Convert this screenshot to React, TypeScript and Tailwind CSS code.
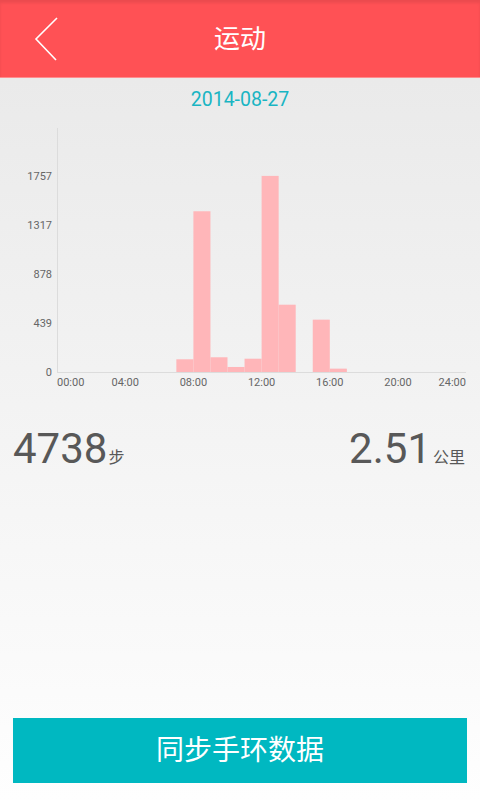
const CJK = "font-['Roboto','Noto_Sans_CJK_SC',sans-serif]";

const HOURS: { h: number; v: number }[] = [
  { h: 7, v: 114 },
  { h: 8, v: 1440 },
  { h: 9, v: 132 },
  { h: 10, v: 45 },
  { h: 11, v: 119 },
  { h: 12, v: 1757 },
  { h: 13, v: 603 },
  { h: 15, v: 469 },
  { h: 16, v: 30 },
];

const X0 = 57;
const SLOT = 17.05;
const BASE = 250;
const PER = 49 / 439;

function StepChart() {
  const yTicks = [0, 439, 878, 1317, 1757];
  const xTicks = ["00:00", "04:00", "08:00", "12:00", "16:00", "20:00", "24:00"];
  return (
    <svg width="480" height="280" viewBox="0 0 480 280" className="block">
      {HOURS.map((b) => {
        const hgt = b.v * PER;
        return (
          <rect
            key={b.h}
            x={X0 + SLOT * b.h}
            y={BASE - hgt}
            width={SLOT}
            height={hgt}
            fill="#ffb6b9"
          />
        );
      })}
      <line x1="57.5" y1="6" x2="57.5" y2={BASE} stroke="#dcdcdc" strokeWidth="1" />
      <line x1="57" y1={BASE + 0.5} x2="466" y2={BASE + 0.5} stroke="#dcdcdc" strokeWidth="1" />
      {yTicks.map((t) => (
        <text
          key={t}
          x="52"
          y={BASE - t * PER + 4}
          textAnchor="end"
          fontSize="11"
          fill="#666"
          fontFamily="Roboto, sans-serif"
        >
          {t}
        </text>
      ))}
      {xTicks.map((t, i) => {
        const x = X0 + SLOT * 4 * i;
        const anchor = i === 0 ? "start" : i === 6 ? "end" : "middle";
        return (
          <text
            key={t}
            x={i === 6 ? 466 : x}
            y={BASE + 14}
            textAnchor={anchor}
            fontSize="11"
            fill="#666"
            fontFamily="Roboto, sans-serif"
          >
            {t}
          </text>
        );
      })}
    </svg>
  );
}

export default function App() {
  return (
    <div className={`w-[480px] h-[800px] flex flex-col ${CJK}`}>
      {/* Header */}
      <div className="relative h-[78px] shrink-0 bg-[#ff5155] shadow-[inset_0_3px_3px_rgba(0,0,0,0.08)] border-b border-[#ff8c8e] flex items-center justify-center">
        <svg
          className="absolute left-[33px] top-[16px]"
          width="28"
          height="46"
          viewBox="0 0 28 46"
        >
          <path d="M24 2 L3 23 L23 44" fill="none" stroke="#fff" strokeWidth="1.6" />
        </svg>
        <span className="text-white text-[26px] leading-none">运动</span>
      </div>

      {/* Body */}
      <div className="flex-1 flex flex-col bg-gradient-to-b from-[#eaeaea] to-[#fefefe]">
        <div className="h-[44px] flex items-center justify-center text-[19.5px] text-[#19b5c3]">
          2014-08-27
        </div>

        <StepChart />

        <div className="mt-[26px] pl-[13px] pr-[15px] flex justify-between items-baseline text-[#585858]">
          <div className="flex items-baseline">
            <span className="text-[42px] leading-none">4738</span>
            <span className="text-[16px] ml-[1px]">步</span>
          </div>
          <div className="flex items-baseline">
            <span className="text-[42px] leading-none">2.51</span>
            <span className="text-[16px] ml-[2px]">公里</span>
          </div>
        </div>

        <div className="flex-1" />

        <button className="mx-[13px] mb-[17px] h-[65px] bg-[#00b8c1] text-white text-[28px] flex items-center justify-center">
          同步手环数据
        </button>
      </div>
    </div>
  );
}
